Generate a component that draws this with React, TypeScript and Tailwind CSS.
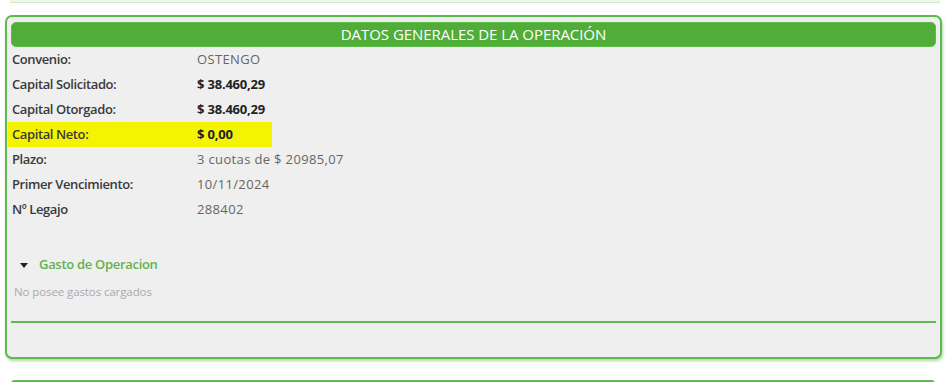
import React from "react";

const rows: { label: string; value: string; bold?: boolean; hl?: boolean }[] = [
  { label: "Convenio:", value: "OSTENGO" },
  { label: "Capital Solicitado:", value: "$ 38.460,29", bold: true },
  { label: "Capital Otorgado:", value: "$ 38.460,29", bold: true },
  { label: "Capital Neto:", value: "$ 0,00", bold: true, hl: true },
  { label: "Plazo:", value: "3 cuotas de $ 20985,07" },
  { label: "Primer Vencimiento:", value: "10/11/2024" },
  { label: "Nº Legajo", value: "288402" },
];

export default function App() {
  return (
    <div
      className="w-[950px] h-[382px] bg-white overflow-hidden"
      style={{ fontFamily: '"Open Sans", "Noto Sans", sans-serif' }}
    >
      <div className="mx-[10px] h-[3px] bg-[#eef7ea] border-b border-[#cfe9c6]" />
      <div className="mt-[12px] ml-[5px] w-[937px] h-[344px] border-2 border-[#5dba4e] rounded-[7px] bg-[#efefef] shadow-[1px_2px_3px_rgba(80,170,60,0.45)] px-[1px] pt-[5px] flex flex-col">
        <div className="mx-[3px] h-[25px] rounded-[5px] bg-[#4fad38] border border-[#5cbb48] flex items-center justify-center text-white text-[15px] leading-none tracking-[-0.05px]">
          DATOS GENERALES DE LA OPERACIÓN
        </div>
        <div className="flex flex-col">
          {rows.map((r) => (
            <div
              key={r.label}
              className={`flex items-center h-[25px] w-[264px] pl-[4px] text-[13px] ${r.hl ? "bg-[#f4f400]" : ""}`}
            >
              <div className="w-[185px] shrink-0 text-[#3a3a3a] font-semibold tracking-[-0.4px]">{r.label}</div>
              <div
                className={`whitespace-nowrap shrink-0 tabular-nums ${r.bold ? "font-bold text-[#222] tracking-[-0.2px]" : "text-[#666] tracking-[0.35px]"}`}
              >
                {r.value}
              </div>
            </div>
          ))}
        </div>
        <div className="mt-[33px] flex items-center h-[20px] pl-[12px]">
          <svg width="8" height="5" viewBox="0 0 8 5" className="mr-[11px]">
            <path d="M0 0 L8 0 L4 5 Z" fill="#222" />
          </svg>
          <span className="text-[13px] font-semibold text-[#63b24f] tracking-[-0.3px]">Gasto de Operacion</span>
        </div>
        <div className="mt-[10px] pl-[6px] text-[11.5px] text-[#aaa] leading-[14px] tracking-[-0.1px]">
          No posee gastos cargados
        </div>
        <div className="mt-[22px] mx-[3px] h-[2px] bg-[#5dba4e]" />
      </div>
      <div className="mt-[21px] mx-[10px] w-[926px] h-[10px] border-2 border-[#5dba4e] rounded-[6px]" />
    </div>
  );
}
